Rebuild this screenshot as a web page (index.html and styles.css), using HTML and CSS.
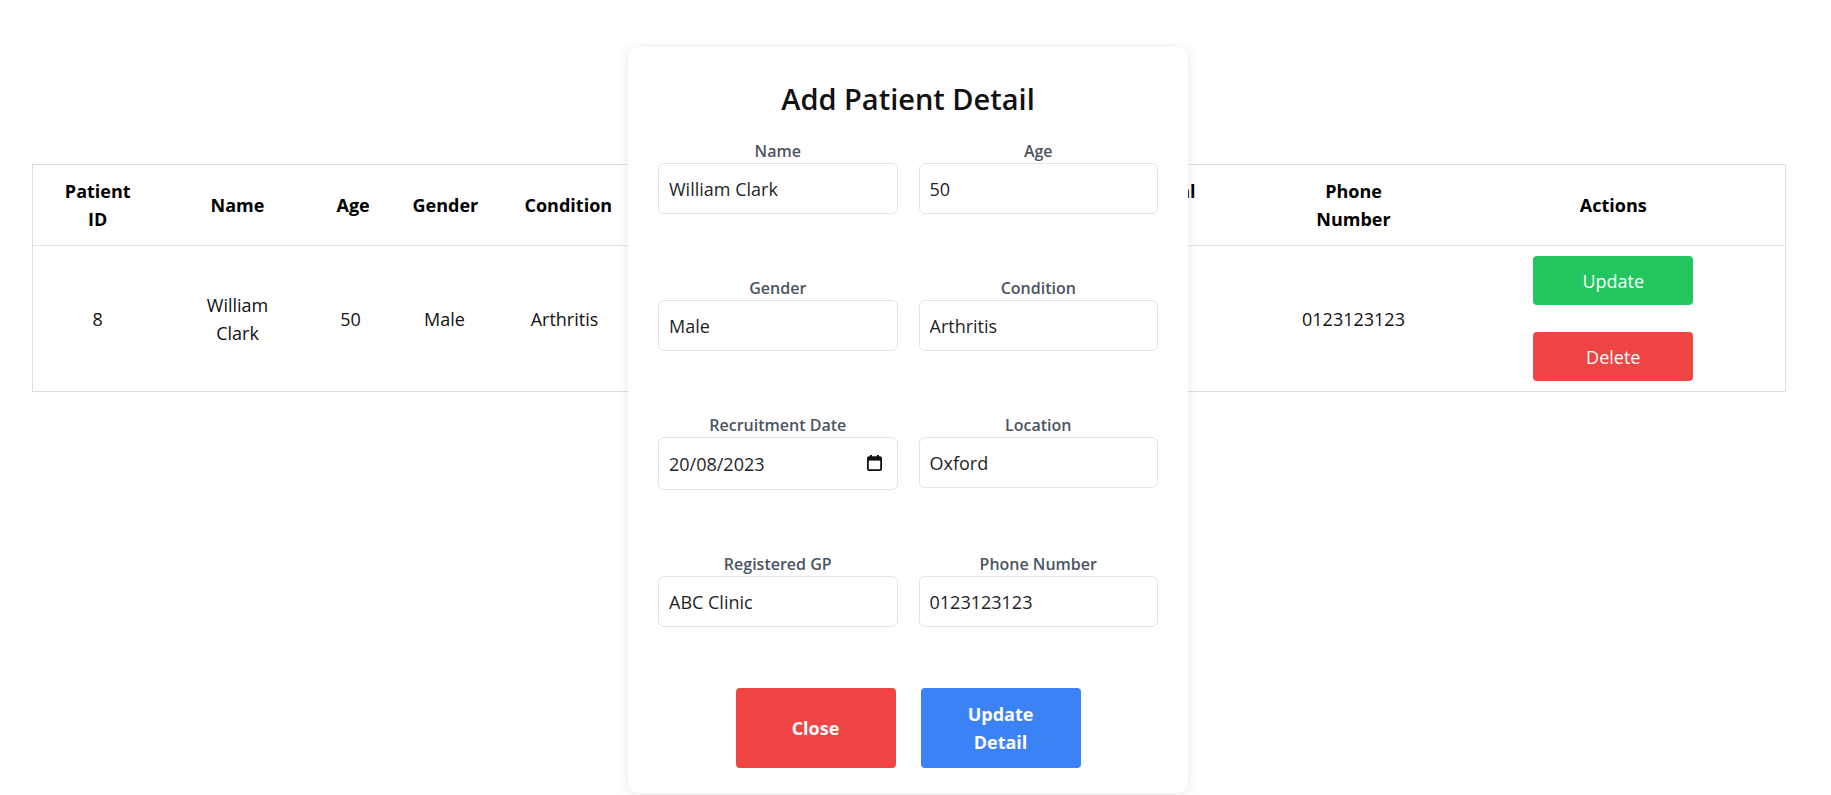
FILE: index.html
```html
<!DOCTYPE html>
<html lang="en">
<head>
<meta charset="utf-8">
<title>Patients</title>
<link rel="stylesheet" href="styles.css">
</head>
<body>
<div class="page">
  <table class="patients">
    <colgroup>
      <col class="c-id"><col class="c-name"><col class="c-age"><col class="c-gender"><col class="c-cond">
      <col class="c-date"><col class="c-loc"><col class="c-gp"><col class="c-phone"><col class="c-act">
    </colgroup>
    <thead>
      <tr>
        <th>Patient ID</th><th>Name</th><th>Age</th><th>Gender</th><th>Condition</th>
        <th>Recruitment Date</th><th>Location</th><th class="th-narrow">Medical Notes</th><th>Phone Number</th><th>Actions</th>
      </tr>
    </thead>
    <tbody>
      <tr>
        <td>8</td><td>William Clark</td><td>50</td><td>Male</td><td>Arthritis</td>
        <td>20/08/2023</td><td>Oxford</td><td>None</td><td>0123123123</td>
        <td class="actions">
          <div class="action-stack">
            <button class="btn-row btn-green">Update</button>
            <button class="btn-row btn-red">Delete</button>
          </div>
        </td>
      </tr>
    </tbody>
  </table>

  <div class="modal">
    <h2 class="modal-title">Add Patient Detail</h2>
    <form class="form-grid">
      <div class="field">
        <label class="field-label">Name</label>
        <input class="field-input" type="text" value="William Clark">
      </div>
      <div class="field">
        <label class="field-label">Age</label>
        <input class="field-input" type="text" value="50">
      </div>
      <div class="field">
        <label class="field-label">Gender</label>
        <input class="field-input" type="text" value="Male">
      </div>
      <div class="field">
        <label class="field-label">Condition</label>
        <input class="field-input" type="text" value="Arthritis">
      </div>
      <div class="field">
        <label class="field-label">Recruitment Date</label>
        <div class="date-wrap">
          <input class="field-input date-input" type="text" value="20/08/2023">
          <svg class="cal-icon" width="15" height="16" viewBox="0 0 15 16" aria-hidden="true">
            <rect x="3" y="0" width="2" height="3" fill="#111"/>
            <rect x="10" y="0" width="2" height="3" fill="#111"/>
            <rect x="0.9" y="2.2" width="13.2" height="12.9" rx="1" fill="none" stroke="#111" stroke-width="1.8"/>
            <rect x="0.9" y="2.2" width="13.2" height="3.4" fill="#111"/>
          </svg>
        </div>
      </div>
      <div class="field">
        <label class="field-label">Location</label>
        <input class="field-input" type="text" value="Oxford">
      </div>
      <div class="field">
        <label class="field-label">Registered GP</label>
        <input class="field-input" type="text" value="ABC Clinic">
      </div>
      <div class="field">
        <label class="field-label">Phone Number</label>
        <input class="field-input" type="text" value="0123123123">
      </div>
    </form>
    <div class="modal-actions">
      <button class="btn-modal btn-red">Close</button>
      <button class="btn-modal btn-blue">Update Detail</button>
    </div>
  </div>
</div>
</body>
</html>
```

FILE: styles.css
```css
html, body {
  margin: 0;
  padding: 0;
  background: #ffffff;
}

body {
  font-family: "Open Sans", "Noto Sans", "Liberation Sans", sans-serif;
  color: #111111;
}

.page {
  position: relative;
  width: 1816px;
  box-sizing: border-box;
  padding: 164px 32px 0;
  height: 795px;
}

.patients {
  width: 100%;
  table-layout: fixed;
  border-collapse: collapse;
  border: 1px solid #dcdce1;
  font-size: 18px;
  line-height: 28px;
}

.c-id { width: 130px; }
.c-name { width: 150px; }
.c-age { width: 76px; }
.c-gender { width: 112px; }
.c-cond { width: 128px; }
.c-date { width: 232px; }
.c-loc { width: 195px; }
.c-gp { width: 210px; }
.c-phone { width: 176px; }
.c-act { width: 344px; }

.patients th {
  font-weight: 700;
  color: #000;
  padding: 12px 24px;
  text-align: center;
  vertical-align: middle;
  border-bottom: 1px solid #e3e3e8;
}

.patients th.th-narrow {
  padding-left: 50px;
  padding-right: 50px;
}

.patients td {
  padding: 12px 24px;
  text-align: center;
  vertical-align: middle;
  color: #111;
}

.patients td.actions {
  padding: 10px 24px;
}

.action-stack {
  display: flex;
  flex-direction: column;
  align-items: center;
  gap: 27px;
}

.btn-row {
  width: 160px;
  height: 49px;
  border: none;
  border-radius: 4px;
  color: #fff;
  font-family: inherit;
  font-size: 18px;
  font-weight: 400;
  cursor: pointer;
}

.btn-green { background: #22c55e; }
.btn-red { background: #ef4444; }
.btn-blue { background: #3b82f6; }

.modal {
  position: absolute;
  top: 47px;
  left: calc(50% - 280px);
  width: 560px;
  box-sizing: border-box;
  padding: 34px 30px 25px;
  background: #fff;
  border-radius: 10px;
  box-shadow: 0 2px 14px rgba(0, 0, 0, 0.09);
}

.modal-title {
  margin: 0 0 22px;
  text-align: center;
  font-size: 29px;
  line-height: 36px;
  font-weight: 600;
  color: #111;
}

.form-grid {
  display: grid;
  grid-template-columns: 1fr 1fr;
  column-gap: 21px;
  row-gap: 62px;
  margin: 0;
}

.field {
  display: flex;
  flex-direction: column;
}

.field-label {
  text-align: center;
  font-size: 16px;
  line-height: 24px;
  font-weight: 600;
  color: #4b5563;
}

.field-input {
  display: block;
  width: 100%;
  box-sizing: border-box;
  height: 51px;
  padding: 0 10px;
  border: 1px solid #e2e4e8;
  border-radius: 6px;
  font-family: inherit;
  font-size: 18px;
  color: #1f1f1f;
  background: #fff;
  outline: none;
}

.date-wrap {
  position: relative;
}

.date-input {
  height: 53px;
}

.cal-icon {
  position: absolute;
  right: 16px;
  top: 18px;
}

.modal-actions {
  display: flex;
  justify-content: center;
  gap: 25px;
  margin-top: 61px;
}

.btn-modal {
  width: 160px;
  min-height: 80px;
  padding: 12px 24px;
  border: none;
  border-radius: 4px;
  color: #fff;
  font-family: inherit;
  font-size: 18px;
  line-height: 28px;
  font-weight: 700;
  cursor: pointer;
}
```
